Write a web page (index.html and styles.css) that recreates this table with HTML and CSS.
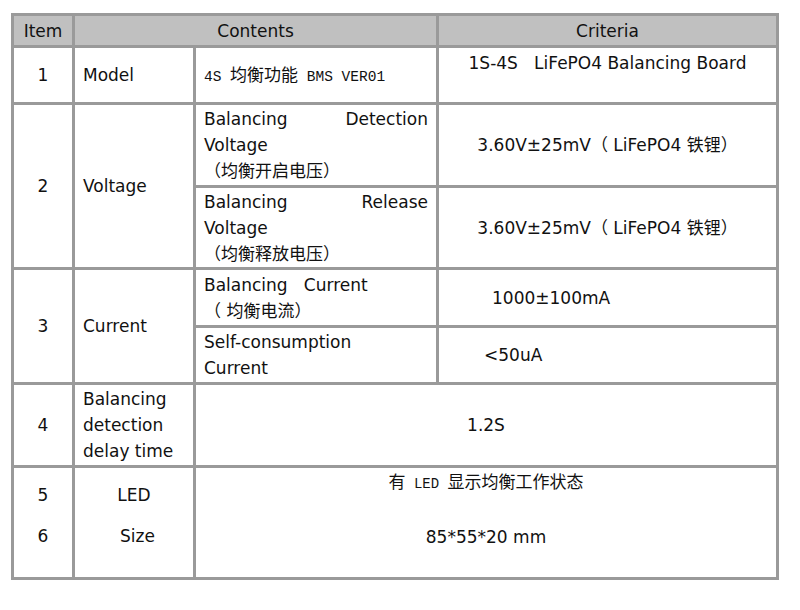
FILE: index.html
```html
<!DOCTYPE html>
<html lang="en">
<head>
<meta charset="utf-8">
<title>4S BMS Balancing Board</title>
<link rel="stylesheet" href="styles.css">
</head>
<body>
<table class="spec">
  <colgroup>
    <col class="c-item">
    <col class="c-name">
    <col class="c-sub">
    <col class="c-crit">
  </colgroup>
  <tr class="r-head">
    <th>Item</th>
    <th colspan="2">Contents</th>
    <th>Criteria</th>
  </tr>
  <tr class="r-1">
    <td class="num">1</td>
    <td class="name">Model</td>
    <td class="sub"><span class="mono">4S </span><span class="cjk">均衡功能</span><span class="mono"> BMS VER01</span></td>
    <td class="crit crit-top">1S-4S&nbsp;&nbsp; LiFePO4 Balancing Board</td>
  </tr>
  <tr class="r-2a">
    <td class="num" rowspan="2">2</td>
    <td class="name" rowspan="2">Voltage</td>
    <td class="sub just">Balancing Detection Voltage<br>（均衡开启电压）</td>
    <td class="crit">3.60V±25mV（ LiFePO4 铁锂）</td>
  </tr>
  <tr class="r-2b">
    <td class="sub just">Balancing Release Voltage<br>（均衡释放电压）</td>
    <td class="crit">3.60V±25mV（ LiFePO4 铁锂）</td>
  </tr>
  <tr class="r-3a">
    <td class="num" rowspan="2">3</td>
    <td class="name" rowspan="2">Current</td>
    <td class="sub">Balancing&nbsp;&nbsp; Current<br>（ 均衡电流）</td>
    <td class="crit crit-cur">1000±100mA</td>
  </tr>
  <tr class="r-3b">
    <td class="sub">Self-consumption<br>Current</td>
    <td class="crit crit-self">&lt;50uA</td>
  </tr>
  <tr class="r-4">
    <td class="num">4</td>
    <td class="name">Balancing detection delay time</td>
    <td class="merged" colspan="2">1.2S</td>
  </tr>
  <tr class="r-5">
    <td class="num pair"><div>5</div><div>6</div></td>
    <td class="name pair"><div>LED</div><div class="size">Size</div></td>
    <td class="merged merged-pair" colspan="2">
      <div class="led"><span class="cjk">有</span><span class="mono-s"> LED </span><span class="cjk">显示均衡工作状态</span></div>
      <div class="dims">85*55*20 mm</div>
    </td>
  </tr>
</table>
</body>
</html>
```

FILE: styles.css
```css
html, body {
  margin: 0;
  padding: 0;
  background: #ffffff;
}

body {
  padding: 13px 0 0 11px;
  font-family: "DejaVu Sans", "Noto Sans CJK SC", sans-serif;
  font-size: 17px;
  color: #111111;
}

.spec {
  border-collapse: collapse;
  table-layout: fixed;
  width: 765px;
  border: 3px solid #7c7c7c;
  line-height: 26px;
}

.c-item { width: 61px; }
.c-name { width: 121px; }
.c-sub  { width: 243px; }
.c-crit { width: 340px; }

.spec th,
.spec td {
  border: 3px solid #9a9a9a;
  padding: 0 8px;
  vertical-align: middle;
}

.spec th {
  background: #c0c0c0;
  font-weight: normal;
  text-align: center;
  padding: 0;
}

.r-head { height: 32px; }
.r-1    { height: 57px; }
.r-2a   { height: 83px; }
.r-2b   { height: 82px; }
.r-3a   { height: 58px; }
.r-3b   { height: 57px; }
.r-4    { height: 83px; }
.r-5    { height: 112px; }

.spec td.num {
  text-align: center;
  padding: 0;
}

.spec td.name,
.spec td.sub {
  text-align: left;
}

.spec td.just {
  text-align: justify;
}

.mono {
  font-family: "Liberation Mono", "Noto Sans CJK SC", monospace;
  font-size: 14.5px;
}

.mono-s {
  font-family: "Liberation Mono", "Noto Sans CJK SC", monospace;
  font-size: 14px;
}

.cjk {
  font-family: "Noto Sans CJK SC", sans-serif;
  font-size: 17px;
}

.spec td.crit {
  text-align: center;
}

.spec td.crit-top {
  vertical-align: top;
  padding-top: 2px;
}

.spec td.crit-cur {
  text-align: left;
  padding-left: 53px;
}

.spec td.crit-self {
  text-align: left;
  padding-left: 45px;
}

.spec td.merged {
  text-align: center;
}

.spec td.pair {
  vertical-align: top;
  padding: 7px 0 0;
  line-height: 41px;
  text-align: center;
}

.spec td.pair .size {
  padding-left: 7px;
}

.spec td.merged-pair {
  vertical-align: top;
  padding-top: 0;
}

.merged-pair .dims {
  margin-top: 27px;
}
```
